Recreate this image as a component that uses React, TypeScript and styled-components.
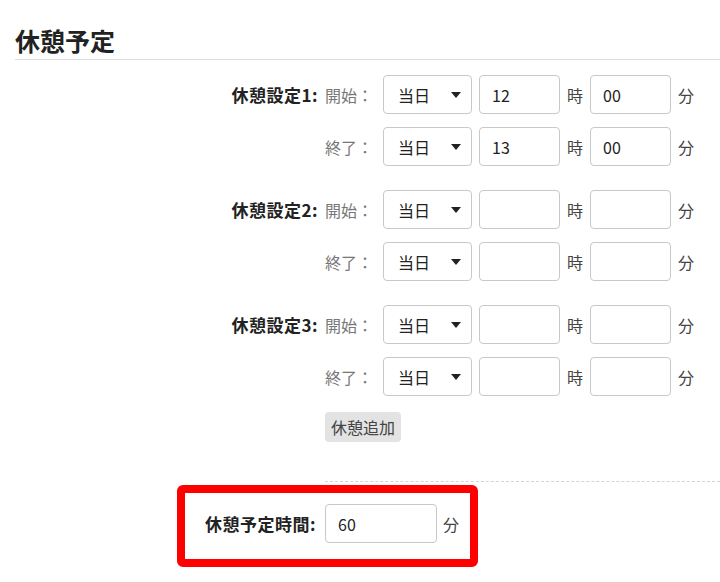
import styled, { createGlobalStyle } from "styled-components";

const GlobalStyle = createGlobalStyle`
  body {
    margin: 0;
    background: #fff;
    font-family: "Noto Sans CJK JP", "Noto Sans", sans-serif;
    color: #333;
  }
`;

const Page = styled.div`
  width: 720px;
  padding-left: 15px;
  box-sizing: border-box;
`;

const Heading = styled.h2`
  margin: 0;
  padding: 25px 0 4px;
  font-size: 25px;
  line-height: 30px;
  font-weight: 700;
  color: #222;
  border-bottom: 1px solid #ddd;
`;

const Form = styled.div`
  padding-top: 15px;
`;

const Groups = styled.div`
  display: flex;
  flex-direction: column;
  gap: 24px;
`;

const Group = styled.div`
  display: flex;
  flex-direction: column;
  gap: 13px;
`;

const Row = styled.div`
  display: flex;
  align-items: center;
  gap: 7px;
  height: 39px;
`;

const Label = styled.div<{ $width: number }>`
  width: ${(p) => p.$width}px;
  flex-shrink: 0;
  text-align: right;
  white-space: nowrap;
  font-size: 17px;
  letter-spacing: 0.5px;
  font-weight: 700;
  color: #222;
`;

const SubLabel = styled.div`
  width: 51px;
  font-size: 16px;
  color: #777;
  white-space: nowrap;
`;

const SelectBox = styled.div`
  position: relative;
  width: 89px;
  height: 39px;
  box-sizing: border-box;
  border: 1px solid #c8c8c8;
  border-radius: 4px;
  display: flex;
  align-items: center;
  padding-left: 14px;
  font-size: 16px;
  color: #222;
`;

const Arrow = styled.svg`
  position: absolute;
  right: 10px;
  top: 16px;
`;

const TextInput = styled.input<{ $width: number }>`
  width: ${(p) => p.$width}px;
  height: 39px;
  box-sizing: border-box;
  border: 1px solid #c8c8c8;
  border-radius: 4px;
  padding: 0 12px;
  font-family: inherit;
  font-size: 16px;
  color: #222;
  outline: none;
`;

const Unit = styled.span`
  font-size: 16px;
  color: #444;
  white-space: nowrap;
`;

const ButtonRow = styled.div`
  margin-top: 16px;
  padding-left: 310px;
`;

const AddButton = styled.button`
  height: 30px;
  padding: 0 6px;
  border: none;
  border-radius: 4px;
  background: #e3e3e3;
  font-family: inherit;
  font-size: 16px;
  color: #444;
`;

const Divider = styled.div`
  margin: 39px 0 0 310px;
  border-top: 1px dashed #d4d4d4;
`;

const Highlight = styled.div`
  margin: 3px 0 0 162px;
  width: 301px;
  box-sizing: border-box;
  border: 8px solid #f00;
  border-radius: 6px;
  padding: 11px 10px 16px 19px;
  display: flex;
  align-items: center;
  gap: 9px;
`;

const TotalUnit = styled(Unit)`
  margin-left: -3px;
`;

type Slot = { start: [string, string]; end: [string, string] };

const slots: Slot[] = [
  { start: ["12", "00"], end: ["13", "00"] },
  { start: ["", ""], end: ["", ""] },
  { start: ["", ""], end: ["", ""] },
];

function DaySelect() {
  return (
    <SelectBox>
      当日
      <Arrow width="10" height="6" viewBox="0 0 10 6">
        <path d="M0 0h10L5 6z" fill="#222" />
      </Arrow>
    </SelectBox>
  );
}

function TimeRow({ label, sub, value }: { label: string; sub: string; value: [string, string] }) {
  return (
    <Row>
      <Label $width={303}>{label}</Label>
      <SubLabel>{sub}</SubLabel>
      <DaySelect />
      <TextInput $width={81} defaultValue={value[0]} />
      <Unit>時</Unit>
      <TextInput $width={81} defaultValue={value[1]} />
      <Unit>分</Unit>
    </Row>
  );
}

export default function App() {
  return (
    <Page>
      <GlobalStyle />
      <Heading>休憩予定</Heading>
      <Form>
        <Groups>
          {slots.map((s, i) => (
            <Group key={i}>
              <TimeRow label={`休憩設定${i + 1}:`} sub="開始：" value={s.start} />
              <TimeRow label="" sub="終了：" value={s.end} />
            </Group>
          ))}
        </Groups>
        <ButtonRow>
          <AddButton>休憩追加</AddButton>
        </ButtonRow>
        <Divider />
        <Highlight>
          <Label $width={112}>休憩予定時間:</Label>
          <TextInput $width={112} defaultValue="60" />
          <TotalUnit>分</TotalUnit>
        </Highlight>
      </Form>
    </Page>
  );
}
